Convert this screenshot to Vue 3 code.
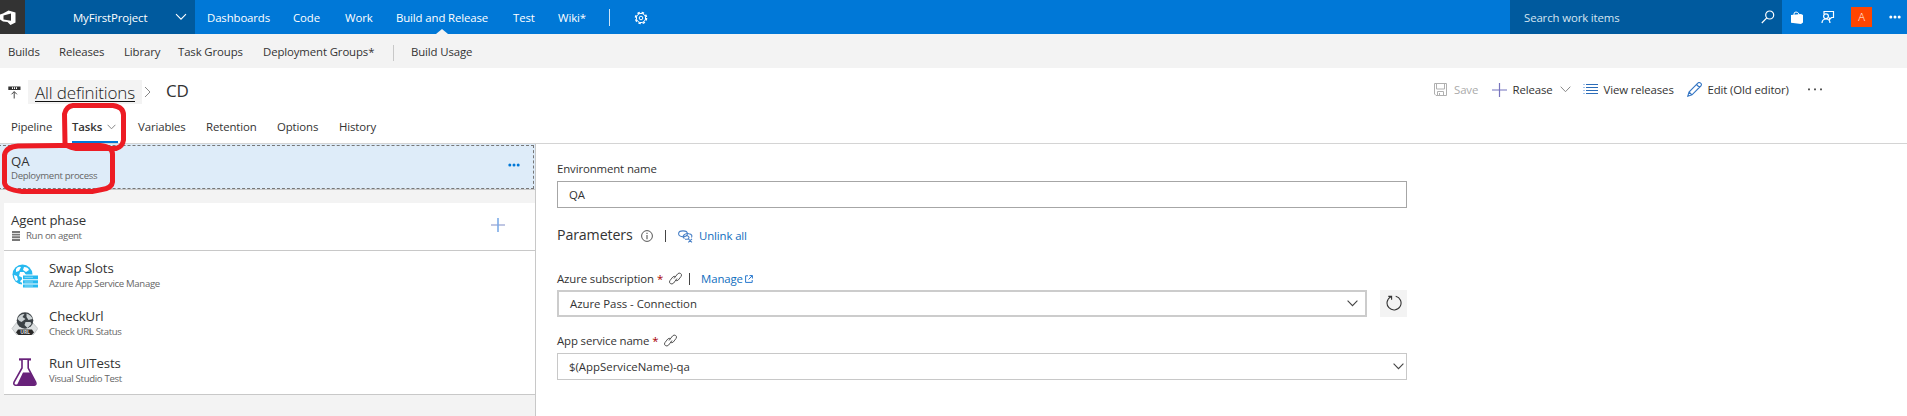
<script setup>
const hubs = [
  { text: 'Dashboards', w: 86 },
  { text: 'Code', w: 52 },
  { text: 'Work', w: 51 },
  { text: 'Build and Release', w: 117, active: true },
  { text: 'Test', w: 45 },
  { text: 'Wiki*', w: 51 },
]
const subHubs = [
  { text: 'Builds', w: 51 },
  { text: 'Releases', w: 65 },
  { text: 'Library', w: 54 },
  { text: 'Task Groups', w: 85 },
  { text: 'Deployment Groups*', w: 130 },
]
const tabs = [
  { text: 'Pipeline', w: 61 },
  { text: 'Tasks', w: 66, active: true },
  { text: 'Variables', w: 68 },
  { text: 'Retention', w: 71 },
  { text: 'Options', w: 62 },
  { text: 'History', w: 60 },
]
const tasks = [
  { title: 'Swap Slots', sub: 'Azure App Service Manage', icon: 'azure' },
  { title: 'CheckUrl', sub: 'Check URL Status', icon: 'url' },
  { title: 'Run UITests', sub: 'Visual Studio Test', icon: 'flask' },
]
</script>

<template>
  <div class="page">
    <header class="top">
      <div class="logo">
        <svg width="25" height="34" viewBox="0 0 25 34">
          <path d="M0 14.5 3 13.5 8.500 10.500 15.500 12.500V22.500L10.500 25 7.500 22 3 21.500 0 19.500Z" fill="#fff" />
          <path d="M3.500 15.500 11 13.500V20.700L3.500 19.500Z" fill="#333" />
        </svg>
      </div>
      <div class="project">
        <span>MyFirstProject</span>
        <svg width="12" height="8" viewBox="0 0 12 8"><path d="M1 1.2 6 6.2 11 1.2" fill="none" stroke="#fff" stroke-width="1.1" /></svg>
      </div>
      <nav class="hubs">
        <span v-for="h in hubs" :key="h.text" class="cell" :class="{ current: h.active }" :style="{ width: h.w + 'px' }"><b>{{ h.text }}</b></span>
        <i class="bar"></i>
        <svg class="gear" width="14" height="14" viewBox="0 0 14 14" fill="none" stroke="#fff">
          <circle cx="7" cy="7" r="5.5" stroke-width="1.6" stroke-dasharray="2.4 1.92" />
          <circle cx="7" cy="7" r="4.6" stroke-width="1" />
          <circle cx="7" cy="7" r="1.8" />
        </svg>
      </nav>
      <div class="search">
        <span>Search work items</span>
        <svg width="14" height="14" viewBox="0 0 14 14" fill="none" stroke="#fff" stroke-width="1.2"><circle cx="8.7" cy="5" r="4" /><path d="M5.8 7.9.8 13" /></svg>
      </div>
      <div class="tools">
        <svg width="12" height="13" viewBox="0 0 12 13"><path d="M0 4 10 3 12 4V11.5L10 13 0 11.7Z" fill="#fff" /><path d="M3 4.5V3Q3 1 5 1T8 3V4.5" fill="none" stroke="#fff" /></svg>
        <svg class="feedback" width="14" height="14" viewBox="0 0 14 14" fill="none" stroke="#fff" stroke-width="1.2"><path d="M3 4V1.5H12.5V7.5H10.5L8.5 9.5V7.5" /><circle cx="5" cy="6.3" r="2.4" /><path d="M1 13Q1.2 9 5 9T9 13" /></svg>
        <span class="avatar">A</span>
        <svg class="dots" width="12" height="4" viewBox="0 0 12 4" fill="#fff"><circle cx="1.8" cy="2" r="1.5" /><circle cx="6" cy="2" r="1.5" /><circle cx="10.2" cy="2" r="1.5" /></svg>
      </div>
    </header>

    <nav class="sub">
      <span v-for="s in subHubs" :key="s.text" class="cell" :style="{ width: s.w + 'px' }">{{ s.text }}</span>
      <i class="bar"></i>
      <span>Build Usage</span>
    </nav>

    <section class="title">
      <svg class="def" width="13" height="13" viewBox="0 0 13 13">
        <path d="M.3.5H12.5V4H.3Z" fill="#333" /><path d="M4 1.3H5V3H4ZM6 1.3H7V3H6ZM8 1.3H9V3H8Z" fill="#fff" />
        <path d="M6.2 12.5V5.8M3.5 8.3 6.2 5.6 8.9 8.3" fill="none" stroke="#444" />
      </svg>
      <span class="crumb"><u>All definitions</u></span>
      <svg class="sep" width="7" height="12" viewBox="0 0 7 12"><path d="M1 1 6 6 1 11" fill="none" stroke="#888" /></svg>
      <span class="name">CD</span>
      <div class="actions">
        <svg width="13" height="13" viewBox="0 0 13 13" fill="none" stroke="#b0b0b0"><path d="M.5.5H12.5V12.5H2L.5 11ZM2.5.5V6H10.5V.5M3.5 12.5V8.5H9.5V12.5M5.5 10V12" /></svg>
        <span class="save">Save</span>
        <svg width="15" height="14" viewBox="0 0 15 14" fill="none"><path d="M0 7H15" stroke="#9a9ad0" stroke-width="1.4" /><path d="M7.5 0V14" stroke="#7774bd" stroke-width="1.2" /></svg>
        <span class="release">Release</span>
        <svg class="chev" width="11" height="7" viewBox="0 0 11 7"><path d="M.7.7 5.5 5.7 10.3.7" fill="none" stroke="#888" /></svg>
        <svg width="15" height="11" viewBox="0 0 15 11" stroke="#2b6cb8"><path d="M3 .5H15M3 3.500H15M3 6.500H15M3 9.500H15" /><path d="M0 .5H2M0 3.500H2M0 6.500H2M0 9.500H2" stroke="#a5c4ea" /></svg>
        <span class="view">View releases</span>
        <svg width="15" height="15" viewBox="0 0 15 15" fill="none" stroke="#3576c4" stroke-width="1.1"><path d="M.8 14.2 2 10 10.8 1.2Q12-.2 13.6 1.2T13.8 4L5 12.8ZM9.5 2.5 12.5 5.5M2 10 5 12.8" /></svg>
        <span class="edit">Edit (Old editor)</span>
        <svg width="14" height="3" viewBox="0 0 14 3" fill="#555"><path d="M0 .5H2V2.3H0ZM6 .5H8V2.3H6ZM12 .5H14V2.3H12Z" /></svg>
      </div>
    </section>

    <nav class="tabs">
      <span v-for="t in tabs" :key="t.text" class="cell" :class="{ on: t.active }" :style="{ width: t.w + 'px' }">
        {{ t.text }}
        <svg v-if="t.active" width="9" height="6" viewBox="0 0 9 6"><path d="M.6.8 4.5 4.8 8.4.8" fill="none" stroke="#888" /></svg>
      </span>
    </nav>

    <main class="body">
      <aside class="left">
        <div class="process">
          <div class="text"><div class="big">QA</div><div class="small">Deployment process</div></div>
          <svg width="12" height="4" viewBox="0 0 12 4" fill="#0078d7"><circle cx="1.8" cy="2" r="1.5" /><circle cx="6" cy="2" r="1.5" /><circle cx="10.2" cy="2" r="1.5" /></svg>
        </div>
        <div class="card">
          <div class="phase">
            <div class="text">
              <div class="big">Agent phase</div>
              <div class="small agent">
                <svg width="8" height="10" viewBox="0 0 8 10"><path d="M0 0H8V2H0ZM0 2.7H8V4.6H0ZM0 5.3H8V7.2H0ZM0 8H8V10H0Z" fill="#777" /></svg>
                <span>Run on agent</span>
              </div>
            </div>
            <svg width="14" height="14" viewBox="0 0 14 14"><path d="M0 7H14" stroke="#b0b8dc" stroke-width="1.6" /><path d="M7 0V14" stroke="#7cabe8" stroke-width="1.6" /></svg>
          </div>
          <div v-for="t in tasks" :key="t.title" class="task">
            <svg v-if="t.icon === 'azure'" width="27" height="27" viewBox="0 0 27 27">
              <circle cx="11.5" cy="11.5" r="10" fill="#27b9f0" />
              <path d="M5 6Q7 3 10 4L8 8 5 9ZM13 4Q17 4 18 7L15 9 12 7ZM9 9 13 9 15 12 12 15 8 13ZM3 12 6 13 7 17 5 18Q3 15 3 12ZM10 17 12 16V20L9 19Z" fill="#fff" />
              <path d="M11 11.5H27V27H11Z" fill="#fff" /><path d="M12 12.5H27V16.3H12ZM12 17.2H27V20.6H12ZM12 21.5H27V24.5H12Z" fill="#27b9f0" />
              <path d="M13.5 14.3H22M13.5 19H22M13.5 23H22" stroke="#a5e1f8" stroke-width=".8" />
            </svg>
            <svg v-else-if="t.icon === 'url'" width="27" height="27" viewBox="0 0 27 27">
              <path d="M6 11H21L26.8 17.5 22.500 23.500H5.500L1 17.5Z" fill="#dfe2e3" stroke="#b4b8ba" stroke-width=".7" />
              <circle cx="14" cy="9.500" r="8.300" fill="#3c4246" />
              <path d="M6.5 8Q8.5 3 13.5 3L11.5 6 14.5 8 10.5 11 8.5 10ZM15.5 2.500Q20.500 4 21.500 8L17.500 9 15.5 6ZM14.5 11 19.500 11 20.500 13 16.500 17 13.500 14Z" fill="#ccd2d4" />
              <path d="M7 18.500H21L23 21.500 20.500 24H7.500L5 21.500Z" fill="#292929" />
              <text x="14" y="23.3" text-anchor="middle" font-size="5" font-weight="700" fill="#ddd">URL</text>
            </svg>
            <svg v-else width="27" height="29" viewBox="0 0 27 29">
              <path d="M8 1.4H20" stroke="#68217a" stroke-width="2.2" />
              <path d="M11 2V10L3.100 24Q2.100 27 4.500 27.200H23.300Q25.800 27 24.600 24L17.200 10V2" fill="#fff" stroke="#68217a" stroke-width="1.6" />
              <path d="M12 14.500H19.500L24.500 24.500 24 27H6Z" fill="#68217a" />
            </svg>
            <div class="text"><div class="big">{{ t.title }}</div><div class="small">{{ t.sub }}</div></div>
          </div>
        </div>
      </aside>

      <section class="form">
        <div class="label first">Environment name</div>
        <div class="field env">QA</div>
        <div class="params">
          <span class="ptitle">Parameters</span>
          <svg class="info" width="12" height="12" viewBox="0 0 12 12" fill="none" stroke="#555"><circle cx="6" cy="6" r="5.4" /><path d="M6 5V9.3M6 2.8V4" stroke-width="1.1" /></svg>
          <i class="vbar"></i>
          <svg class="unlink" width="15" height="13" viewBox="0 0 15 13" fill="none" stroke="#477fc6" stroke-width="1.1"><ellipse cx="5" cy="3.8" rx="4.4" ry="2.9" /><path d="M6.5 8.5Q4 7 6 5T11 3.8Q15 4.5 13.5 7.5M7 9.3H9.5Q11 9 11 7.5T8 5.5M10.3 8.8 14 12.3M14 8.8 10.3 12.3" /></svg>
          <a>Unlink all</a>
        </div>
        <div class="label azure">
          <span>Azure subscription</span><em>*</em>
          <svg class="link" width="13" height="13" viewBox="0 0 13 13" fill="none" stroke="#555"><path d="M5 6.5 8.5 2Q10 .3 11.7 1.5T12 4.5L9.3 8Q8 9.3 6.3 8.3M8 6.5 4.7 11Q3 12.8 1.3 11.5T1 8.5L3.8 5Q5 3.8 6.7 4.7" /></svg>
          <i class="vbar"></i>
          <a>Manage</a>
          <svg class="ext" width="8" height="8" viewBox="0 0 8 8" fill="none" stroke="#2878cf"><path d="M3 .8H.6V7.4H7.2V5M4.5.6H7.4V3.5M7.3.7 3.5 4.5" /></svg>
        </div>
        <div class="row">
          <div class="field select"><span>Azure Pass - Connection</span>
            <svg width="11" height="7" viewBox="0 0 11 7"><path d="M.6.6 5.5 5.6 10.4.6" fill="none" stroke="#444" stroke-width="1.1" /></svg>
          </div>
          <div class="refresh">
            <svg width="16" height="16" viewBox="0 0 16 16" fill="none" stroke="#333" stroke-width="1.1"><path d="M9.7 1.2A7 7 0 1 1 5 1.7M2.3 1.4H5.6V4.8" /></svg>
          </div>
        </div>
        <div class="label service">
          <span>App service name</span><em>*</em>
          <svg class="link" width="13" height="13" viewBox="0 0 13 13" fill="none" stroke="#555"><path d="M5 6.5 8.5 2Q10 .3 11.7 1.5T12 4.5L9.3 8Q8 9.3 6.3 8.3M8 6.5 4.7 11Q3 12.8 1.3 11.5T1 8.5L3.8 5Q5 3.8 6.7 4.7" /></svg>
        </div>
        <div class="field app"><span>$(AppServiceName)-qa</span>
          <svg width="11" height="7" viewBox="0 0 11 7"><path d="M.6.6 5.5 5.6 10.4.6" fill="none" stroke="#444" stroke-width="1.1" /></svg>
        </div>
      </section>
    </main>

    <svg class="marks" width="140" height="200" viewBox="0 0 140 200" fill="none" stroke="#ed1c24" stroke-width="5" stroke-linejoin="round">
      <path d="M73 105.5H113Q123.500 107 123.500 115V140Q122.500 147 116 148.500H76Q66 147 65 143L64.500 114Q66 106.500 73 105.500Z" />
      <path d="M18 146 60 145.500H100Q112.500 147 112.500 154V182Q112 188 102 189.500L92 191.500H22Q5.500 190 4.500 183V155Q6 147 18 146Z" />
    </svg>
  </div>
</template>

<style>
body { overflow: hidden; background: #fff; }
</style>
<style scoped>
.page { position: relative; width: 1907px; height: 416px; overflow: hidden; background: #fff; color: #333; font: 11.4px/16px "Open Sans", "Noto Sans", sans-serif; letter-spacing: -0.12px; white-space: nowrap; }
.page * { box-sizing: border-box; }
svg { display: block; flex: none; }
.cell { flex: none; }
i, em { font-style: normal; flex: none; }
.top { display: flex; height: 34px; background: #0078d7; color: #fff; }
.logo { width: 25px; background: #333; }
.project { width: 170px; background: #005a9e; display: flex; align-items: center; justify-content: space-between; padding: 0 8px 0 48px; }
.project span { padding-top: 1px; }
.hubs { display: flex; align-items: center; padding-left: 12px; width: 1315px; }
.hubs b { font-weight: 400; }
.hubs .cell { height: 34px; line-height: 35px; }
.current { position: relative; }
.current::after { content: ""; position: absolute; left: 40px; bottom: 0; border: 6px solid transparent; border-top: 0; border-bottom: 5px solid #f3f3f3; }
.hubs .bar { width: 1px; height: 17px; background: #cce4f7; }
.gear { margin-left: 24px; margin-top: 2px; }
.search { width: 272px; background: #005a9e; display: flex; align-items: center; justify-content: space-between; padding: 0 7px 0 14px; color: #d5e5f1; }
.search span { padding-top: 1px; }
.tools { display: flex; align-items: center; flex: 1; padding-left: 9px; }
.feedback { margin-left: 18px; }
.avatar { width: 21px; height: 20px; margin-left: 16px; background: #ff4500; text-align: center; line-height: 20px; font-weight: 300; }
.dots { margin-left: 17px; }
.sub { display: flex; align-items: center; height: 34px; padding: 1px 0 0 8px; background: #f3f3f3; }
.sub .bar { width: 1px; height: 16px; margin-top: 3px; background: #c8c8c8; margin-right: 17px; }
.title { display: flex; height: 44px; padding: 12px 0 0 8px; }
.def { margin: 6px 7px 0 0; }
.crumb { flex: none; width: 114px; height: 24px; background: #f3f3f3; padding-left: 7px; font-size: 17px; letter-spacing: -0.14px; font-weight: 300; line-height: 25px; color: #222; }
.crumb u { text-decoration: none; display: inline-block; height: 22px; border-bottom: 1px solid #111; }
.sep { margin: 6px 0 0 2px; }
.name { flex: none; width: 1283px; padding-left: 15px; font-size: 17px; line-height: 21px; }
.actions { display: flex; align-items: center; height: 19px; }
.save { width: 44.5px; padding-left: 7px; color: #aaa; }
.release { width: 53px; padding-left: 6px; }
.chev { margin-right: 12px; }
.view { width: 89px; padding-left: 6px; }
.edit { width: 106px; padding-left: 6px; }
.tabs { display: flex; height: 32px; padding-left: 11px; }
.tabs .cell { height: 32px; padding-top: 7px; }
.tabs .on { display: flex; gap: 5px; font-weight: 600; position: relative; }
.tabs .on::after { content: ""; position: absolute; left: 0; bottom: 1px; width: 46px; height: 2px; background: #0078d7; }
.on svg { margin-top: 5px; }
.body { display: flex; height: 273px; border-top: 1px solid #d4d4d4; margin-top: -1px; }
.left { width: 536px; background: #f3f3f3; border-right: 1px solid #c8c8c8; }
.process { display: flex; justify-content: space-between; height: 46px; margin-left: -3px; padding: 9px 15px 0 14px; background: #deecf9; border-bottom: 1px solid #c8c8c8; outline: 1px dashed #777; outline-offset: -2px; }
.process > svg { margin-top: 10px; }
.process .small { margin-top: -1px; }
.big { font-size: 13.2px; line-height: 17px; }
.small { font-size: 9.6px; line-height: 13px; color: #666; letter-spacing: -0.32px; }
.card { margin: 13px 0 0 4px; height: 192px; background: #fff; border-bottom: 1px solid #c8c8c8; }
.phase { display: flex; justify-content: space-between; height: 48px; padding: 9px 30px 0 7px; border-bottom: 1px solid #c8c8c8; }
.phase > svg { margin-top: 6px; }
.agent { display: flex; align-items: center; gap: 6px; padding-left: 1px; }
.task { display: flex; height: 47.5px; padding: 9px 0 0 7px; }
.task > svg { margin: 3px 11px 0 0; }
.form { padding: 17px 0 0 21px; width: 871px; }
.label { display: flex; height: 16px; }
.field { display: flex; align-items: center; justify-content: space-between; width: 850px; height: 27px; border: 1px solid #a6a6a6; padding-left: 11px; }
.env { margin-top: 4px; }
.params { display: flex; align-items: center; height: 20px; margin-top: 17px; }
.ptitle { width: 84px; font-size: 14.2px; }
.info, .params .vbar, .unlink, .params a { position: relative; top: 1px; }
.vbar { width: 1px; height: 12px; background: #444; }
.params .vbar { margin: 0 12px 0 12px; }
a { color: #106ebe; }
.params a { padding-left: 6px; }
em { color: #a80000; margin-left: 3px; }
.azure { margin-top: 26px; }
.link { margin: 1px 0 0 6px; }
.label .vbar { margin: 2px 11px 0 7px; }
.ext { margin: 4px 0 0 2px; }
.row { display: flex; justify-content: space-between; width: 850px; margin-top: 3px; }
.select { width: 810px; border: 2px solid #ccc; padding: 0 7px 0 11px; letter-spacing: -0.04px; }
.refresh { width: 27px; height: 27px; background: #f3f3f3; display: flex; justify-content: center; padding-top: 5px; }
.service { margin-top: 16px; }
.app { margin-top: 4px; border-color: #c8c8c8; padding-right: 2px; letter-spacing: 0; }
.marks { position: absolute; left: 0; top: 0; }
</style>
